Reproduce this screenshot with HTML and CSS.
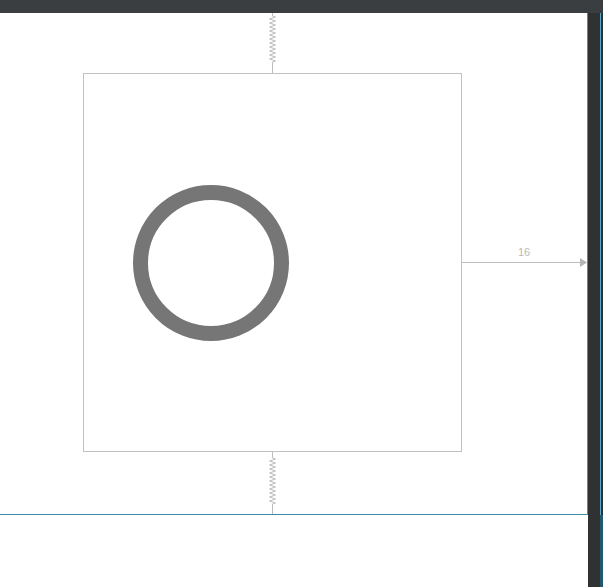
FILE: index.html
```html
<!DOCTYPE html>
<html>
<head>
<meta charset="utf-8">
<link rel="stylesheet" href="styles.css">
</head>
<body>
<div class="topbar"></div>
<div class="main">
  <div class="canvas-col">
    <div class="screen">
      <div class="widget">
        <div class="ring"></div>
      </div>
      <svg class="constraints" width="587" height="501" viewBox="0 0 587 501">
        <path class="spring" d="M272.5 0 V3 l3 1 l-6 2 l6 2 l-6 2 l6 2 l-6 2 l6 2 l-6 2 l6 2 l-6 2 l6 2 l-6 2 l6 2 l-6 2 l6 2 l-6 2 l6 2 l-6 2 l6 2 l-6 2 l6 2 l-6 2 l6 2 l-3 1 V60"/>
        <path class="spring" d="M272.5 439 V445 l3 1 l-6 2 l6 2 l-6 2 l6 2 l-6 2 l6 2 l-6 2 l6 2 l-6 2 l6 2 l-6 2 l6 2 l-6 2 l6 2 l-6 2 l6 2 l-6 2 l6 2 l-6 2 l6 2 l-6 2 l6 2 l-3 1 V501"/>
        <path class="arrow-line" d="M462 249.5 H580"/>
        <polygon class="arrow-head" points="580,245 587,249.5 580,254"/>
        <text class="margin-label" x="524" y="243" text-anchor="middle">16</text>
      </svg>
    </div>
  </div>
  <div class="strip"></div>
  <div class="edge">
    <div class="edge-top"></div>
    <div class="edge-bottom"></div>
  </div>
</div>
</body>
</html>
```
FILE: styles.css
```css
html, body {
  margin: 0;
  padding: 0;
  width: 603px;
  height: 587px;
  overflow: hidden;
  background: #ffffff;
  font-family: "Liberation Sans", Arial, sans-serif;
}

.topbar {
  height: 13px;
  background: #3b3e40;
}

.main {
  display: flex;
  height: 574px;
}

.canvas-col {
  width: 588px;
  background: #ffffff;
}

.screen {
  position: relative;
  box-sizing: border-box;
  width: 588px;
  height: 502px;
  border-right: 1px solid #3f93b0;
  border-bottom: 1px solid #3a8ca8;
  background: #ffffff;
}

.widget {
  position: absolute;
  left: 83px;
  top: 60px;
  width: 377px;
  height: 377px;
  border: 1px solid #c2c2c2;
}

.ring {
  position: absolute;
  left: 49px;
  top: 111px;
  width: 156px;
  height: 156px;
  box-sizing: border-box;
  border: 15px solid #767676;
  border-radius: 50%;
  filter: blur(0.6px);
}

.constraints {
  position: absolute;
  left: 0;
  top: 0;
  overflow: visible;
}

.spring {
  fill: none;
  stroke: #bdbdbd;
  stroke-width: 1;
}

.arrow-line {
  fill: none;
  stroke: #bdbdbd;
  stroke-width: 1;
}

.arrow-head {
  fill: #b5b5b5;
}

.margin-label {
  font-family: "Liberation Sans", Arial, sans-serif;
  font-size: 11px;
  fill: #b9b9b9;
}

.strip {
  width: 12px;
  background: #2f3133;
}

.edge {
  width: 3px;
  display: flex;
  flex-direction: column;
}

.edge-top {
  height: 502px;
  background: #2f3133;
  border-left: 1px solid #5aa6c6;
}

.edge-bottom {
  flex: 1;
  background: #22586c;
}
```
